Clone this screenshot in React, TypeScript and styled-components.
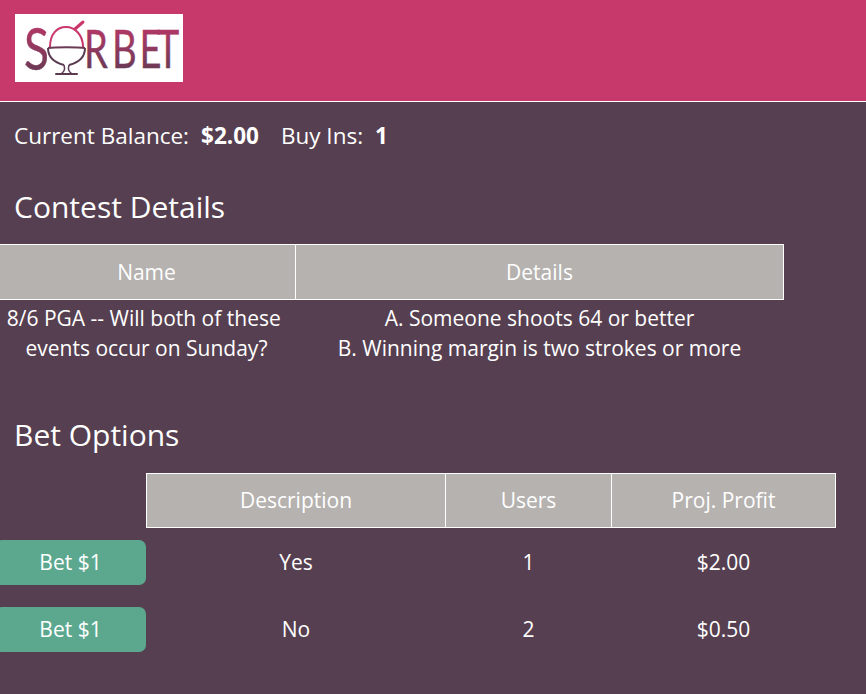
import * as React from 'react';
import styled, { createGlobalStyle } from 'styled-components';

const GlobalStyle = createGlobalStyle`
  html, body {
    margin: 0;
    padding: 0;
    background: #563f50;
    color: #fff;
    font-family: 'Open Sans', sans-serif;
    overflow: hidden;
  }
`;

const betOptions = [
  { description: 'Yes', users: 1, profit: '$2.00' },
  { description: 'No', users: 2, profit: '$0.50' },
];

const Logo = () => (
  <LogoBox>
    <svg width="168" height="68" viewBox="0 0 168 68">
      <defs>
        <linearGradient id="sorbetInk" x1="0" y1="0" x2="0" y2="1">
          <stop offset="0" stopColor="#c9386c" />
          <stop offset="1" stopColor="#5a3a50" />
        </linearGradient>
      </defs>
      <LogoLetters transform="translate(9 56) scale(0.78 1)" fontSize="59">S</LogoLetters>
      <LogoLetters transform="translate(69 54) scale(0.72 1)" fontSize="53" x="0 39 77 101">RBET</LogoLetters>
      {/* sundae */}
      <path d="M35 33 C35 20 42 13 51 13 C60 13 68 21 68 33" fill="none" stroke="#c9386c" strokeWidth="2" />
      <path d="M60 15 L68 8" stroke="#c9386c" strokeWidth="3" strokeLinecap="round" />
      <path d="M33 34 C40 33 63 33 70 34" fill="none" stroke="#6b3a55" strokeWidth="2" />
      <path d="M33 34 C33 44 41 49 49 51 M70 34 C70 44 62 49 54 51" fill="none" stroke="#5a3a50" strokeWidth="2" />
      <path d="M49 51 C50 55 50 57 46 60 M54 51 C53 55 53 57 57 60" fill="none" stroke="#5a3a50" strokeWidth="1.5" />
      <path d="M41 60 L62 60" stroke="#5a3a50" strokeWidth="2" strokeLinecap="round" />
    </svg>
  </LogoBox>
);

const App = () => {
  return (
    <>
      <GlobalStyle />
      <Header>
        <Logo />
      </Header>
      <BalanceRow>
        <span>Current Balance:</span>
        <Amount>$2.00</Amount>
        <span>Buy Ins:</span>
        <Count>1</Count>
      </BalanceRow>
      <SectionTitle>Contest Details</SectionTitle>
      <ContestTable>
        <thead>
          <tr>
            <HeadCell $width={298}>Name</HeadCell>
            <HeadCell $width={488}>Details</HeadCell>
          </tr>
        </thead>
        <tbody>
          <tr>
            <ContestCell>8/6 PGA -- Will both of these{'\u00a0'} events occur on Sunday?</ContestCell>
            <ContestCell>
              A. Someone shoots 64 or better
              <br />
              B. Winning margin is two strokes or more
            </ContestCell>
          </tr>
        </tbody>
      </ContestTable>
      <BetTitle>Bet Options</BetTitle>
      <BetTable>
        <thead>
          <tr>
            <BlankCell />
            <BetHeadCell $width={299}>Description</BetHeadCell>
            <BetHeadCell $width={166}>Users</BetHeadCell>
            <BetHeadCell $width={224}>Proj. Profit</BetHeadCell>
          </tr>
        </thead>
        <tbody>
          {betOptions.map((option) => (
            <tr key={option.description}>
              <ButtonCell>
                <BetButton>Bet $1</BetButton>
              </ButtonCell>
              <BetCell>{option.description}</BetCell>
              <BetCell>{option.users}</BetCell>
              <BetCell>{option.profit}</BetCell>
            </tr>
          ))}
        </tbody>
      </BetTable>
    </>
  );
};

export default App;

const Header = styled.header`
  height: 101px;
  box-sizing: content-box;
  background: #c7386b;
  border-bottom: 1px solid #fff;
  padding-left: 15px;
  display: flex;
  align-items: flex-start;
`;

const LogoBox = styled.div`
  margin-top: 14px;
  width: 168px;
  height: 68px;
  background: #fff;
  svg {
    display: block;
  }
`;

const LogoLetters = styled.text`
  font-family: 'Lato', sans-serif;
  font-weight: 400;
  fill: url(#sorbetInk);
  stroke: url(#sorbetInk);
  stroke-width: 0.4;
`;

const BalanceRow = styled.div`
  display: flex;
  padding: 17px 0 0 14px;
  height: 33px;
  font-size: 22.5px;
  line-height: 33px;
`;

const Amount = styled.strong`
  margin: 0 22px 0 12px;
  font-weight: 700;
`;

const Count = styled.strong`
  margin-left: 12px;
  font-weight: 700;
`;

const SectionTitle = styled.h2`
  margin: 0;
  padding: 35px 0 0 14px;
  font-size: 30px;
  font-weight: 400;
  line-height: 40px;
`;

const BetTitle = styled(SectionTitle)`
  padding: 52px 0 0 14px;
`;

const ContestTable = styled.table`
  margin: 17px 0 0 -3px;
  width: 786px;
  border-collapse: collapse;
  table-layout: fixed;
  font-size: 21px;
`;

const BetTable = styled.table`
  margin: 18px 0 0 -5px;
  width: 840px;
  border-collapse: collapse;
  table-layout: fixed;
  font-size: 21px;
`;

const HeadCell = styled.th<{ $width: number }>`
  width: ${(p) => p.$width}px;
  height: 55px;
  padding: 0;
  box-sizing: border-box;
  background: #b5b2b0;
  border: 1px solid #fff;
  font-weight: 400;
  text-align: center;
`;

const BetHeadCell = styled(HeadCell)`
  height: 54px;
  padding-bottom: 2px;
`;

const BlankCell = styled.th`
  width: 151px;
  padding: 0;
`;

const ContestCell = styled.td`
  padding: 3px 0 0;
  text-align: center;
  line-height: 30px;
  vertical-align: top;
`;

const ButtonCell = styled.td`
  padding: 12px 0 10px;
`;

const BetButton = styled.button`
  display: block;
  width: 151px;
  height: 45px;
  padding: 0;
  border: 0;
  border-radius: 7px;
  background: #5ca88f;
  color: #fff;
  font-family: 'Open Sans', sans-serif;
  font-size: 21px;
`;

const BetCell = styled.td`
  padding: 2px 0 0;
  text-align: center;
`;
